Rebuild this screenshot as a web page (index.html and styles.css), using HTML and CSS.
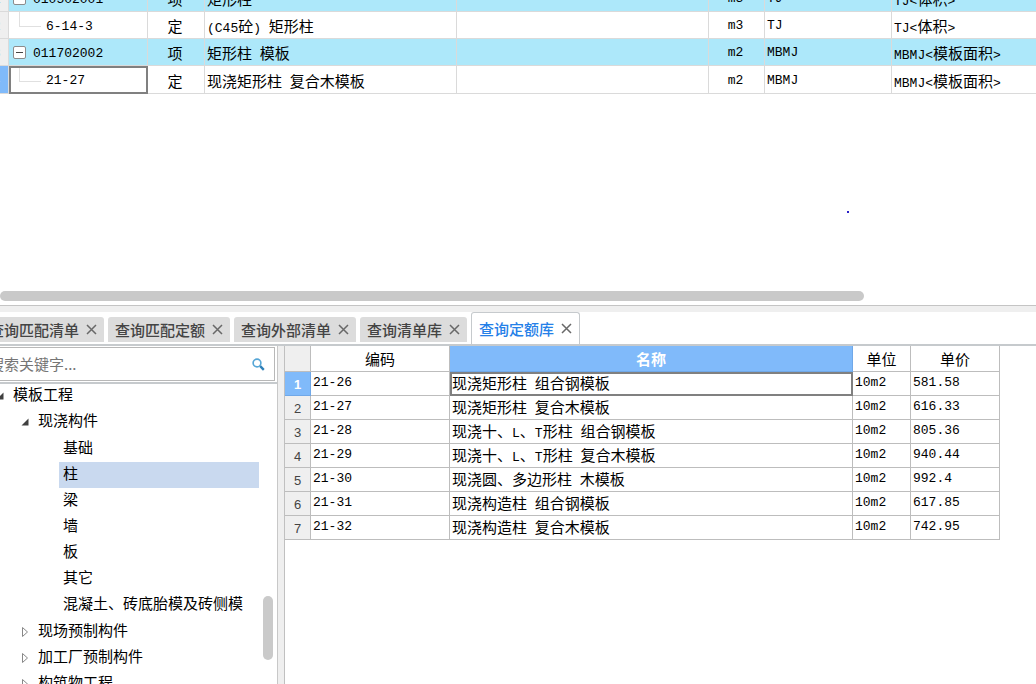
FILE: index.html
```html
<!DOCTYPE html>
<html lang="zh-CN">
<head>
<meta charset="utf-8">
<title>查询定额库</title>
<link rel="stylesheet" href="styles.css">
</head>
<body>
<main class="app">
  <section class="bill">
    <div class="bill-view">
      <table class="bill-table">
        <colgroup><col class="b-no"><col class="b-code"><col class="b-kind"><col class="b-name"><col class="b-feature"><col class="b-unit"><col class="b-expr"><col></colgroup>
        <tbody>
          <tr class="item">
            <th>1</th>
            <td class="code"><div class="node"><button class="toggle" aria-label="折叠"></button><span class="en">010502001</span></div></td>
            <td class="mid">项</td><td>矩形柱</td><td></td><td class="mid en">m3</td><td class="en">TJ</td>
            <td><span class="en">TJ&lt;</span>体积<span class="en">&gt;</span></td>
          </tr>
          <tr>
            <th>2</th>
            <td class="code"><div class="node child"><span class="en">6-14-3</span></div></td>
            <td class="mid">定</td><td><span class="en">(C45</span>砼<span class="en">) </span>矩形柱</td><td></td><td class="mid en">m3</td><td class="en">TJ</td>
            <td><span class="en">TJ&lt;</span>体积<span class="en">&gt;</span></td>
          </tr>
          <tr class="item">
            <th>3</th>
            <td class="code"><div class="node"><button class="toggle" aria-label="折叠"></button><span class="en">011702002</span></div></td>
            <td class="mid">项</td><td>矩形柱<span class="en"> </span>模板</td><td></td><td class="mid en">m2</td><td class="en">MBMJ</td>
            <td><span class="en">MBMJ&lt;</span>模板面积<span class="en">&gt;</span></td>
          </tr>
          <tr class="current">
            <th>4</th>
            <td class="code focus"><div class="node child"><span class="en">21-27</span></div></td>
            <td class="mid">定</td><td>现浇矩形柱<span class="en"> </span>复合木模板</td><td></td><td class="mid en">m2</td><td class="en">MBMJ</td>
            <td><span class="en">MBMJ&lt;</span>模板面积<span class="en">&gt;</span></td>
          </tr>
        </tbody>
      </table>
    </div>
    <div class="hscroll"><div class="hthumb"></div></div>
    <span class="dot"></span>
  </section>

  <div class="splitter-h"></div>

  <nav class="tabs">
    <div class="tab"><span>查询匹配清单</span><button class="close" aria-label="关闭"><svg viewBox="0 0 11 11"><path d="M1 1l9 9M10 1l-9 9"/></svg></button></div>
    <div class="tab"><span>查询匹配定额</span><button class="close" aria-label="关闭"><svg viewBox="0 0 11 11"><path d="M1 1l9 9M10 1l-9 9"/></svg></button></div>
    <div class="tab"><span>查询外部清单</span><button class="close" aria-label="关闭"><svg viewBox="0 0 11 11"><path d="M1 1l9 9M10 1l-9 9"/></svg></button></div>
    <div class="tab"><span>查询清单库</span><button class="close" aria-label="关闭"><svg viewBox="0 0 11 11"><path d="M1 1l9 9M10 1l-9 9"/></svg></button></div>
    <div class="tab active"><span>查询定额库</span><button class="close" aria-label="关闭"><svg viewBox="0 0 11 11"><path d="M1 1l9 9M10 1l-9 9"/></svg></button></div>
  </nav>

  <div class="work">
    <aside class="side">
      <div class="search">
        <input type="text" placeholder="搜索关键字..." aria-label="搜索关键字">
        <button class="find" aria-label="搜索"><svg viewBox="0 0 13 13"><circle cx="5" cy="5" r="3.9"/><path class="handle" d="M8.2 8.2l3.6 3.6"/></svg></button>
      </div>
      <div class="tree">
        <ul class="level1">
          <li><div class="row"><button class="arrow" aria-label="折叠"><svg viewBox="0 0 8 8"><path class="open" d="M7.5 .5v7H.5z"/></svg></button>模板工程</div>
            <ul class="level2">
              <li><div class="row"><button class="arrow" aria-label="折叠"><svg viewBox="0 0 8 8"><path class="open" d="M7.5 .5v7H.5z"/></svg></button>现浇构件</div>
                <ul class="level3">
                  <li class="row">基础</li>
                  <li class="row selected">柱</li>
                  <li class="row">梁</li>
                  <li class="row">墙</li>
                  <li class="row">板</li>
                  <li class="row">其它</li>
                  <li class="row">混凝土、砖底胎模及砖侧模</li>
                </ul>
              </li>
              <li class="row"><button class="arrow" aria-label="展开"><svg class="tall" viewBox="0 0 8 12"><path class="shut" d="M1.5 1.5v9L6.5 6z"/></svg></button>现场预制构件</li>
              <li class="row"><button class="arrow" aria-label="展开"><svg class="tall" viewBox="0 0 8 12"><path class="shut" d="M1.5 1.5v9L6.5 6z"/></svg></button>加工厂预制构件</li>
              <li class="row"><button class="arrow" aria-label="展开"><svg class="tall" viewBox="0 0 8 12"><path class="shut" d="M1.5 1.5v9L6.5 6z"/></svg></button>构筑物工程</li>
            </ul>
          </li>
        </ul>
        <div class="vthumb"></div>
      </div>
    </aside>
    <div class="splitter-v"></div>
    <section class="quota">
      <table class="quota-table">
        <colgroup><col class="q-no"><col class="q-code"><col><col class="q-unit"><col class="q-price"></colgroup>
        <thead>
          <tr><th class="no"></th><th>编码</th><th class="picked">名称</th><th>单位</th><th>单价</th></tr>
        </thead>
        <tbody>
          <tr><th class="no picked">1</th><td class="en">21-26</td><td class="focus">现浇矩形柱<span class="en"> </span>组合钢模板</td><td class="en">10m2</td><td class="en">581.58</td></tr>
          <tr><th class="no">2</th><td class="en">21-27</td><td>现浇矩形柱<span class="en"> </span>复合木模板</td><td class="en">10m2</td><td class="en">616.33</td></tr>
          <tr><th class="no">3</th><td class="en">21-28</td><td>现浇十、<span class="en">L</span>、<span class="en">T</span>形柱<span class="en"> </span>组合钢模板</td><td class="en">10m2</td><td class="en">805.36</td></tr>
          <tr><th class="no">4</th><td class="en">21-29</td><td>现浇十、<span class="en">L</span>、<span class="en">T</span>形柱<span class="en"> </span>复合木模板</td><td class="en">10m2</td><td class="en">940.44</td></tr>
          <tr><th class="no">5</th><td class="en">21-30</td><td>现浇圆、多边形柱<span class="en"> </span>木模板</td><td class="en">10m2</td><td class="en">992.4</td></tr>
          <tr><th class="no">6</th><td class="en">21-31</td><td>现浇构造柱<span class="en"> </span>组合钢模板</td><td class="en">10m2</td><td class="en">617.85</td></tr>
          <tr><th class="no">7</th><td class="en">21-32</td><td>现浇构造柱<span class="en"> </span>复合木模板</td><td class="en">10m2</td><td class="en">742.95</td></tr>
        </tbody>
      </table>
    </section>
  </div>
</main>
</body>
</html>
```
FILE: styles.css
```css
* { box-sizing: border-box; }
body {
  margin: 0;
  background: #fff;
  color: #000;
  font: 15px/22px "Noto Sans CJK SC", sans-serif;
}
button { padding: 0; border: 0; background: none; flex: none; }
ul { margin: 0; padding: 0; list-style: none; }
svg { display: block; fill: none; }
.en { font-family: "Liberation Mono", "Noto Sans CJK SC", monospace; font-size: 13px; white-space: pre; }
span.en { line-height: 1px; }

.app { display: flex; flex-direction: column; height: 100vh; overflow: hidden; }

/* bill of quantities */
.bill { position: relative; flex: none; height: 305px; display: flex; flex-direction: column; overflow: hidden; }
.bill-view { flex: 1; overflow: hidden; }
.bill-table {
  width: calc(100% + 18px);
  margin: -15px 0 0 -18px;
  table-layout: fixed;
  border-collapse: separate;
  border-spacing: 0;
}
.b-no { width: 27px; }
.b-code { width: 139px; }
.b-kind { width: 57px; }
.b-name, .b-feature { width: 252px; }
.b-unit { width: 56px; }
.b-expr { width: 127px; }
.bill-table th, .bill-table td {
  height: 27px;
  padding: 2px 0 0 2px;
  border-right: 1px solid #dadada;
  border-bottom: 1px solid #dadada;
  text-align: left;
  line-height: 22px;
  white-space: nowrap;
}
.bill-table .current td, .bill-table .current th { height: 28px; }
.bill-table th { padding-left: 11px; background: #efefef; color: #9cc8f5; font: 13px "Liberation Mono", monospace; }
.bill-table .mid { text-align: center; padding: 2px 2px 0 0; }
.bill-table .code { padding: 0; }
.bill-table td:last-child { border-right: 0; }
.item td { background: #ade8fa; }
.bill-table .current th { background: #80bafa; }
.focus { outline: 2px solid #808080; outline-offset: -2px; }
.node { display: flex; align-items: center; gap: 7px; height: 26px; padding-left: 4px; }
.child { gap: 5px; padding-left: 10px; }
.child::before {
  content: "";
  align-self: flex-start;
  width: 21px;
  height: 14px;
  border-left: 1px solid #e0e0e0;
  border-bottom: 1px solid #e0e0e0;
}
.node .en { padding-top: 2px; }
.toggle {
  display: grid;
  place-items: center;
  width: 13px;
  height: 13px;
  border: 1px solid #8c8c8c;
  border-radius: 2px;
  background: #fff;
}
.toggle::before { content: ""; width: 7px; height: 1px; background: #444; }
.hscroll { flex: none; height: 14px; }
.hthumb { width: 864px; height: 10px; border-radius: 5px; background: #c9c9c9; }
.dot { position: absolute; left: 847px; top: 211px; width: 2px; height: 2px; background: #2a20c8; }

.splitter-h { flex: none; height: 7px; border-top: 1px solid #c4c4c4; background: #efefef; }

/* tabs */
.tabs {
  flex: none;
  display: flex;
  align-items: flex-end;
  gap: 4px;
  height: 34px;
  margin-left: -18px;
  border-bottom: 2px solid #c6cacd;
}
.tab {
  flex: none;
  display: flex;
  align-items: center;
  gap: 7px;
  height: 25px;
  margin-bottom: 2px;
  padding: 0 7px;
  border-radius: 3px 3px 0 0;
  background: #dcdcdc;
  color: #444;
  font-weight: 500;
}
.tab.active {
  height: 32px;
  margin-bottom: 0;
  border: 1px solid #c6cacd;
  border-bottom: 0;
  background: #fff;
  color: #2580e8;
}
.close { width: 11px; height: 11px; }
.close svg { width: 11px; height: 11px; stroke: #686868; stroke-width: 1.5; }

/* query area */
.work { flex: 1; min-height: 0; display: flex; }
.side { flex: none; width: 278px; display: flex; flex-direction: column; border-right: 1px solid #c8c8c8; }
.search {
  flex: none;
  display: flex;
  align-items: center;
  height: 34px;
  margin: 1px 2px 1px 0;
  border: 1px solid #b8b8b8;
  border-left: 0;
}
.search input {
  flex: 1;
  min-width: 0;
  height: 28px;
  margin-left: -11px;
  padding: 0 0 2px;
  border: 0;
  outline: 0;
  background: none;
  font: inherit;
}
.search input::placeholder { color: #757575; }
.find { width: 13px; height: 13px; margin-right: 9px; }
.find svg { width: 13px; height: 13px; stroke: #56a6d6; stroke-width: 1.6; }
.find .handle { stroke: #2f80b8; stroke-width: 2.4; }
.tree { position: relative; flex: 1; min-height: 0; overflow: hidden; border-top: 2px solid #c6cacd; }
.row { display: flex; align-items: center; height: 26px; padding-bottom: 4px; white-space: nowrap; }
.level1 { margin: -1px 0 0 -4px; }
.level2 { padding-left: 25px; }
.level3 { padding: 1px 0; }
.level3 .row { width: 200px; margin-left: 38px; padding-left: 4px; }
.level3 .selected { background: #c9d9ef; }
.arrow { width: 9px; margin-right: 8px; padding-top: 4px; }
.arrow svg { width: 8px; height: 8px; }
.arrow .tall { height: 12px; }
.open { fill: #404040; }
.shut { stroke: #888; }
.vthumb { position: absolute; right: 4px; top: 212px; width: 10px; height: 64px; border-radius: 5px; background: #cacaca; }
.splitter-v { flex: none; width: 7px; border-right: 1px solid #c0c0c0; background: #efefef; }

.quota { flex: 1; min-width: 0; padding-right: 36px; }
.quota-table { width: 100%; table-layout: fixed; border-collapse: separate; border-spacing: 0; }
.q-no { width: 26px; }
.q-code { width: 139px; }
.q-unit { width: 58px; }
.q-price { width: 89px; }
.quota-table th, .quota-table td {
  height: 24px;
  padding: 0 0 2px 2px;
  border-right: 1px solid #bdbdbd;
  border-bottom: 1px solid #bdbdbd;
  line-height: 20px;
  text-align: left;
  white-space: nowrap;
}
.quota-table thead th { height: 26px; padding: 0; text-align: center; font-weight: 400; }
.quota-table tbody .no { padding: 2px 0 0; text-align: center; font: 13px/20px "Liberation Sans", sans-serif; color: #444; }
.quota-table .no { background: #efefef; }
.quota-table .picked { background: #80bafa; border-color: #70a8e8; }
.quota-table thead .picked, .quota-table tbody .picked { color: #fff; font-weight: 700; }
```
